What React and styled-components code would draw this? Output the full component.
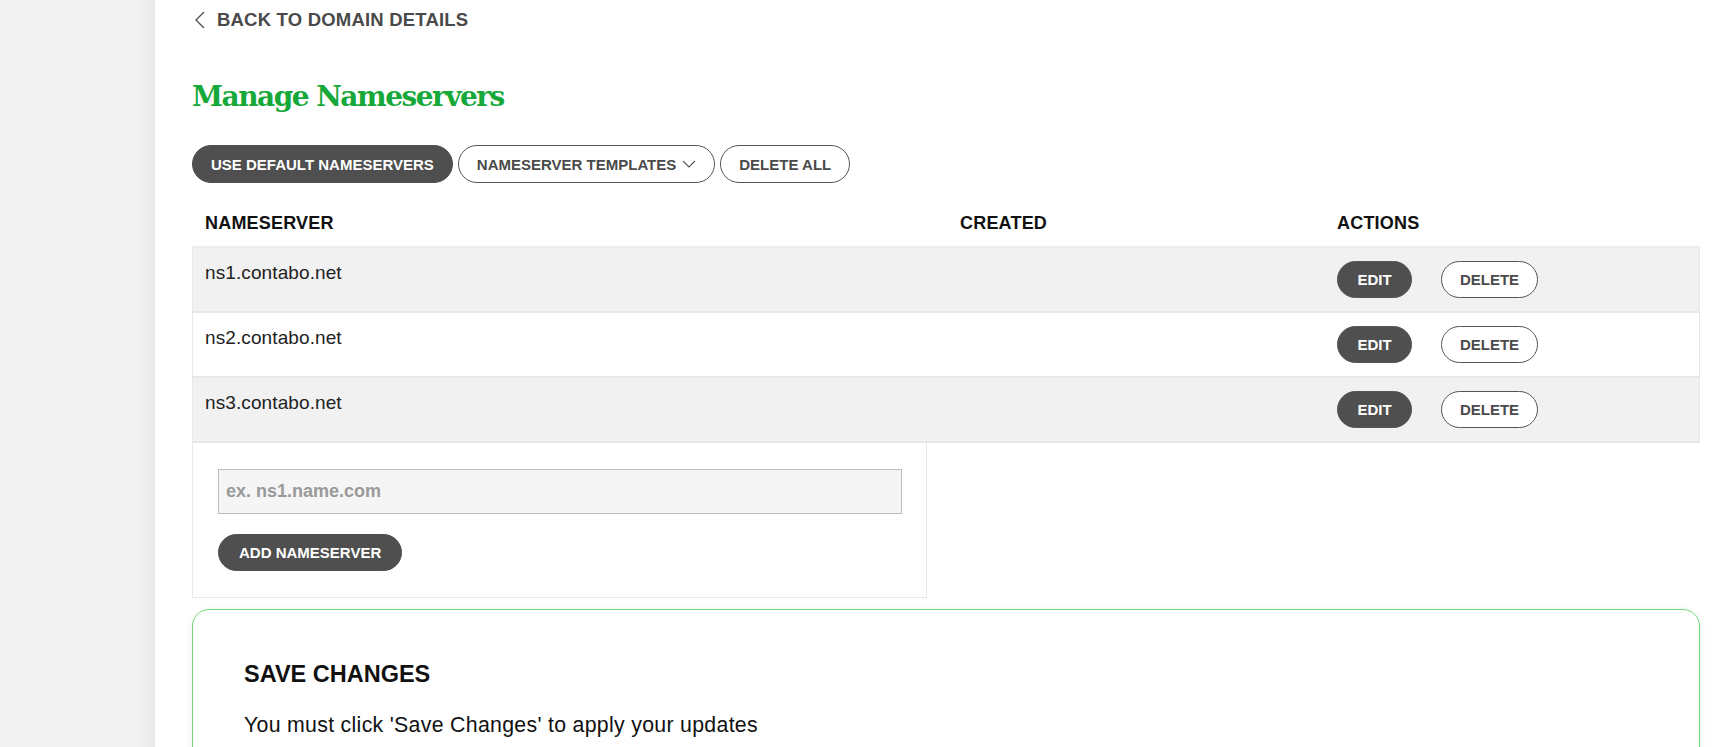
import React from "react";
import styled, { createGlobalStyle } from "styled-components";

const GlobalStyle = createGlobalStyle`
  html, body {
    margin: 0;
    padding: 0;
    background: #fff;
    font-family: "Liberation Sans", Arial, sans-serif;
    color: #111;
  }
  * { box-sizing: border-box; }
`;

const nameservers = ["ns1.contabo.net", "ns2.contabo.net", "ns3.contabo.net"];

export default function App() {
  return (
    <>
      <GlobalStyle />
      <Page>
        <Sidebar />
        <Main>
          <BackLink href="#">
            <svg width="12" height="18" viewBox="0 0 12 18">
              <path d="M10 1 L2 9 L10 17" fill="none" stroke="#555" strokeWidth="1.4" />
            </svg>
            BACK TO DOMAIN DETAILS
          </BackLink>

          <Title>Manage Nameservers</Title>

          <Toolbar>
            <Pill $dark>USE DEFAULT NAMESERVERS</Pill>
            <Pill>
              NAMESERVER TEMPLATES
              <svg width="14" height="9" viewBox="0 0 14 9">
                <path d="M1 1 L7 7 L13 1" fill="none" stroke="#555" strokeWidth="1.1" />
              </svg>
            </Pill>
            <Pill>DELETE ALL</Pill>
          </Toolbar>

          <Table>
            <HeadRow>
              <HeadCell>NAMESERVER</HeadCell>
              <HeadCell>CREATED</HeadCell>
              <HeadCell>ACTIONS</HeadCell>
            </HeadRow>
            {nameservers.map((ns, i) => (
              <Row key={ns} $odd={i % 2 === 0}>
                <Cell>{ns}</Cell>
                <Cell />
                <Actions>
                  <SmallPill $dark>EDIT</SmallPill>
                  <SmallPill $wide>DELETE</SmallPill>
                </Actions>
              </Row>
            ))}
          </Table>

          <AddBox>
            <Input placeholder="ex. ns1.name.com" />
            <AddButton $dark>ADD NAMESERVER</AddButton>
          </AddBox>

          <SaveCard>
            <SaveTitle>SAVE CHANGES</SaveTitle>
            <SaveText>You must click 'Save Changes' to apply your updates</SaveText>
          </SaveCard>
        </Main>
      </Page>
    </>
  );
}

const Page = styled.div`
  display: flex;
  min-height: 747px;
  overflow: hidden;
`;

const Sidebar = styled.div`
  width: 155px;
  flex-shrink: 0;
  background: linear-gradient(to right, #f2f2f2 0%, #f2f2f2 88%, #e9e9e9 100%);
`;

const Main = styled.div`
  flex: 1;
  padding: 9px 12px 0 37px;
  display: flex;
  flex-direction: column;
`;

const BackLink = styled.a`
  display: flex;
  align-items: center;
  gap: 11px;
  color: #4a4a4a;
  text-decoration: none;
  font-weight: 700;
  font-size: 18.5px;
  letter-spacing: 0.2px;
  height: 22px;
  margin-left: 2px;
`;

const Title = styled.h1`
  margin: 48px 0 0;
  font-family: "DejaVu Serif", "Liberation Serif", serif;
  font-weight: 700;
  font-size: 28px;
  letter-spacing: -1.5px;
  color: #17a83a;
  line-height: 36px;
`;

const Toolbar = styled.div`
  display: flex;
  gap: 5px;
  margin-top: 30px;
`;

const Pill = styled.button`
  display: inline-flex;
  align-items: center;
  gap: 6px;
  height: 38px;
  padding: 0 18px;
  border-radius: 20px;
  border: 1px solid ${(p) => (p.$dark ? "#4f4f4f" : "#555")};
  background: ${(p) => (p.$dark ? "#4f4f4f" : "#fff")};
  color: ${(p) => (p.$dark ? "#fff" : "#4a4a4a")};
  font-family: "Liberation Sans", Arial, sans-serif;
  font-weight: 700;
  font-size: 15px;
  cursor: pointer;
`;

const Table = styled.div`
  margin-top: 14px;
  width: 1508px;
`;

const Columns = styled.div`
  display: grid;
  grid-template-columns: 755px 377px 1fr;
`;

const HeadRow = styled(Columns)`
  height: 51px;
  padding-top: 3px;
  align-items: center;
  border-bottom: 2px solid #ececec;
`;

const HeadCell = styled.div`
  padding-left: 13px;
  font-size: 18px;
  letter-spacing: 0.2px;
  font-weight: 700;
  color: #111;
`;

const Row = styled(Columns)`
  height: 65px;
  background: ${(p) => (p.$odd ? "#f1f1f1" : "#fff")};
  border-bottom: 2px solid #e7e7e7;
  border-left: 1px solid #e7e7e7;
  border-right: 1px solid #e7e7e7;
`;

const Cell = styled.div`
  padding: 14px 0 0 12px;
  font-size: 19px;
  letter-spacing: 0.1px;
  color: #222;
`;

const Actions = styled.div`
  display: flex;
  align-items: center;
  gap: 29px;
  padding-left: 12px;
`;

const SmallPill = styled.button`
  height: 37px;
  width: ${(p) => (p.$wide ? "97px" : "75px")};
  border-radius: 19px;
  border: 1px solid #555;
  background: ${(p) => (p.$dark ? "#4f4f4f" : "#fff")};
  color: ${(p) => (p.$dark ? "#fff" : "#4a4a4a")};
  font-family: "Liberation Sans", Arial, sans-serif;
  font-weight: 700;
  font-size: 15px;
  cursor: pointer;
`;

const AddBox = styled.div`
  width: 735px;
  height: 155px;
  border: 1px solid #e8e8e8;
  border-top: none;
  padding: 26px 25px 0 25px;
  display: flex;
  flex-direction: column;
  align-items: flex-start;
  gap: 20px;
`;

const Input = styled.input`
  width: 684px;
  height: 45px;
  background: #f5f5f5;
  border: 1px solid #bcbcbc;
  padding: 0 7px;
  font-family: "Liberation Sans", Arial, sans-serif;
  font-size: 18px;
  font-weight: 700;
  outline: none;

  &::placeholder {
    color: #9a9a9a;
  }
`;

const AddButton = styled(Pill)`
  height: 37px;
  padding: 0 20px;
`;

const SaveCard = styled.div`
  margin-top: 11px;
  width: 1508px;
  height: 200px;
  border: 1px solid #74d87a;
  border-radius: 17px;
  box-shadow: 0 2px 10px rgba(0, 0, 0, 0.06);
  padding: 50px 51px;
`;

const SaveTitle = styled.h2`
  margin: 0;
  font-size: 23.5px;
  font-weight: 700;
  color: #111;
  line-height: 28px;
`;

const SaveText = styled.p`
  margin: 25px 0 0;
  font-size: 21.3px;
  letter-spacing: 0.3px;
  color: #111;
`;
